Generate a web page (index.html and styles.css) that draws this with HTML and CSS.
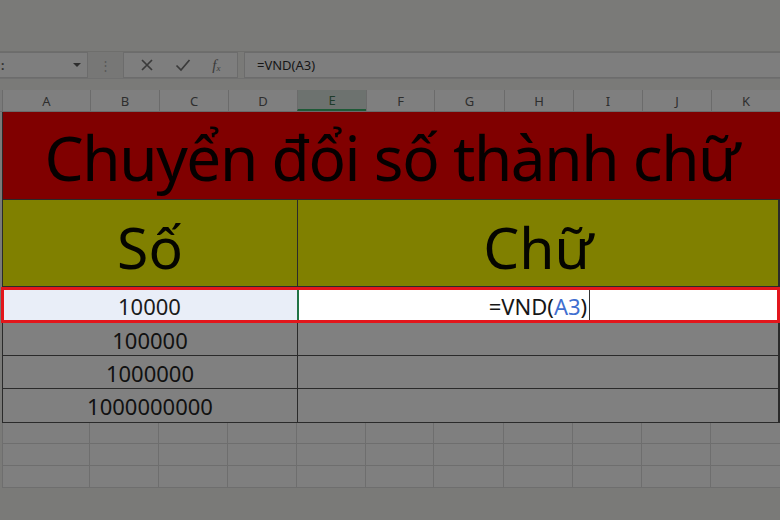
FILE: index.html
```html
<!DOCTYPE html>
<html lang="vi">
<head>
<meta charset="utf-8">
<title>Chuyển đổi số thành chữ</title>
<link rel="stylesheet" href="styles.css">
</head>
<body>
<div class="app">
  <div class="ribbon"></div>

  <div class="fbar">
    <div class="namebox"><span class="nb-text">:</span><span class="caret"></span></div>
    <div class="grip">⋮</div>
    <div class="fbtns">
      <svg class="ico" viewBox="0 0 14 14" width="14" height="14"><path d="M2 2 L12 12 M12 2 L2 12" /></svg>
      <svg class="ico" viewBox="0 0 16 14" width="16" height="14"><path d="M1.5 7.5 L6 12 L14.5 2" /></svg>
      <span class="fx">f<sub>x</sub></span>
    </div>
    <div class="finput">=VND(A3)</div>
  </div>

  <div class="colhead">
    <div class="corner"></div>
    <div class="ch">A</div><div class="ch">B</div><div class="ch">C</div><div class="ch">D</div>
    <div class="ch ch-active">E</div><div class="ch">F</div><div class="ch">G</div><div class="ch">H</div>
    <div class="ch">I</div><div class="ch">J</div><div class="ch">K</div>
  </div>

  <div class="sheet">
    <div class="row r-title">
      <div class="cell c-all title">Chuyển đổi số thành chữ</div>
    </div>
    <div class="row r-head">
      <div class="cell c-left head">Số</div>
      <div class="cell c-right head">Chữ</div>
    </div>
    <div class="row r-edit">
      <div class="cell c-left ref">10000</div>
      <div class="cell c-right active"><span class="formula">=VND(<span class="refname">A3</span>)</span><span class="cursor"></span></div>
    </div>
    <div class="row r-data">
      <div class="cell c-left num">100000</div>
      <div class="cell c-right"></div>
    </div>
    <div class="row r-data">
      <div class="cell c-left num">1000000</div>
      <div class="cell c-right"></div>
    </div>
    <div class="row r-data r-last">
      <div class="cell c-left num">1000000000</div>
      <div class="cell c-right"></div>
    </div>
    <div class="row r-empty e1">
      <div class="g"></div><div class="g"></div><div class="g"></div><div class="g"></div><div class="g"></div><div class="g"></div><div class="g"></div><div class="g"></div><div class="g"></div><div class="g"></div><div class="g"></div>
    </div>
    <div class="row r-empty">
      <div class="g"></div><div class="g"></div><div class="g"></div><div class="g"></div><div class="g"></div><div class="g"></div><div class="g"></div><div class="g"></div><div class="g"></div><div class="g"></div><div class="g"></div>
    </div>
    <div class="row r-empty">
      <div class="g"></div><div class="g"></div><div class="g"></div><div class="g"></div><div class="g"></div><div class="g"></div><div class="g"></div><div class="g"></div><div class="g"></div><div class="g"></div><div class="g"></div>
    </div>
  </div>
</div>
</body>
</html>
```

FILE: styles.css
```css
* { box-sizing: border-box; }

html, body {
  margin: 0;
  padding: 0;
  background: #7a7a78;
}

body {
  width: 780px;
  height: 520px;
  overflow: hidden;
  font-family: "Noto Sans", "Open Sans", sans-serif;
  color: #111;
}

.app {
  --cols: 88px 69px 69px 69px 69px 68px 70px 69px 69px 69px 69px;
  display: flex;
  flex-direction: column;
}

/* ribbon area above the formula bar */
.ribbon {
  height: 52px;
  background: #7a7a78;
  border-bottom: 1px solid #6e6e6c;
}

/* ---------- formula bar ---------- */
.fbar {
  height: 27px;
  display: flex;
  align-items: stretch;
  margin-bottom: 11px;
  border-bottom: 1px solid #707070;
}

.namebox {
  width: 88px;
  background: #7e7e7e;
  border: 1px solid #6c6c6c;
  border-left: none;
  display: flex;
  align-items: center;
  justify-content: space-between;
  padding: 0 6px 0 1px;
  font-size: 12px;
  color: #333;
}

.nb-text { font-weight: bold; }

.caret {
  width: 0;
  height: 0;
  border-left: 4px solid transparent;
  border-right: 4px solid transparent;
  border-top: 4px solid #2d2d2d;
}

.grip {
  width: 35px;
  background: #777776;
  color: #595959;
  display: flex;
  align-items: center;
  justify-content: center;
  font-size: 13px;
}

.fbtns {
  width: 115px;
  background: #7e7e7e;
  border: 1px solid #6c6c6c;
  display: flex;
  align-items: center;
  justify-content: space-around;
  padding: 0 6px 0 6px;
}

.ico {
  fill: none;
  stroke: #3a3a3a;
  stroke-width: 1.7;
}

.fx {
  font-family: "Liberation Serif", serif;
  font-style: italic;
  font-size: 15px;
  color: #3a3a3a;
  line-height: 1;
}
.fx sub { font-size: 9px; vertical-align: -1px; }

.finput {
  flex: 1;
  margin-left: 6px;
  background: #7e7e7e;
  border: 1px solid #6c6c6c;
  border-right: none;
  display: flex;
  align-items: center;
  padding-left: 12px;
  font-size: 13px;
  color: #161616;
}

/* ---------- column headers ---------- */
.colhead {
  height: 22px;
  display: grid;
  grid-template-columns: 2px var(--cols);
  background: #7f7f7f;
  border-bottom: 1px solid #6a6a6a;
}

.corner { background: #7a7a7a; }

.ch {
  border-left: 1px solid #6b6b6b;
  display: flex;
  align-items: center;
  justify-content: center;
  font-size: 13px;
  color: #2e2e2e;
}

.ch-active {
  background: #6d726f;
  color: #1f3b2b;
  border-bottom: 2px solid #1e5a37;
}

/* ---------- sheet ---------- */
.sheet {
  padding-left: 2px;
  display: flex;
  flex-direction: column;
}

.row {
  display: grid;
  grid-template-columns: var(--cols);
}

.cell {
  display: flex;
  align-items: center;
  justify-content: center;
  border-bottom: 1px solid #2a2a2a;
  border-left: 1px solid #2a2a2a;
}

.c-all { grid-column: 1 / -1; }
.c-left { grid-column: 1 / 5; }
.c-right { grid-column: 5 / -1; border-right: 2px solid #2a2a2a; }

.r-title { height: 88px; }
.title {
  background: #800000;
  font-size: 62px;
  letter-spacing: -1.4px;
  color: #050000;
  padding-top: 2px;
}

.r-head { height: 87px; }
.head {
  background: #808000;
  font-size: 57px;
  color: #050500;
  padding-top: 8px;
}

.r-data { height: 33px; }
.r-last { height: 34px; }

.num, .ref {
  font-size: 22px;
  color: #111;
  padding-top: 1px;
}

.r-data .cell { background: #808080; }

/* row being edited, framed in red */
.r-edit {
  position: relative;
  height: 36px;
}

.r-edit::after {
  content: "";
  position: absolute;
  left: -1px;
  right: 0;
  top: 0;
  bottom: 0;
  border: 3px solid #e3161c;
  pointer-events: none;
}

.r-edit .cell { border: none; }

.ref {
  background: #e9eef8;
  color: #1b1b1b;
}

.active {
  background: #ffffff;
  border-left: 2px solid #217346 !important;
  font-size: 22px;
  color: #161616;
  padding-top: 1px;
}

.refname { color: #3f6fd0; }

.cursor {
  align-self: stretch;
  width: 1px;
  margin-left: 2px;
  background: #333;
}

/* empty grid below the table */
.r-empty { height: 22px; }
.r-empty.e1 { height: 21px; }

.g {
  background: #7f7f7f;
  border-right: 1px solid #6e6e6e;
  border-bottom: 1px solid #6e6e6e;
}
.g:first-child { border-left: 1px solid #6e6e6e; }
.r-empty .g:last-child { border-right: none; }
```
